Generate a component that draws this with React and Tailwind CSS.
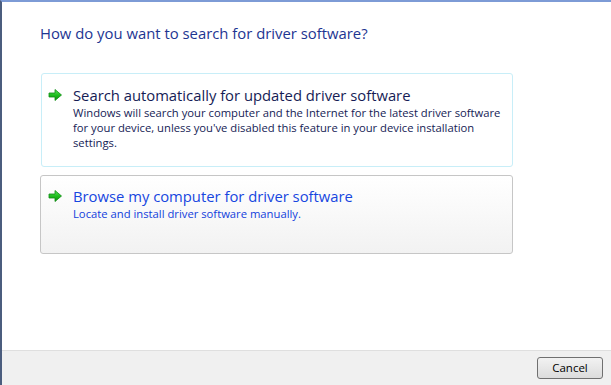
import React from 'react';

const FONT = { fontFamily: '"Open Sans", "Noto Sans", Arial, sans-serif' };

function GreenArrow() {
  return (
    <svg width="15" height="14" viewBox="0 0 15 14" className="shrink-0">
      <defs>
        <linearGradient id="ga" x1="0" y1="0" x2="0" y2="1">
          <stop offset="0" stopColor="#5fe35f" />
          <stop offset="0.5" stopColor="#1fbf1f" />
          <stop offset="1" stopColor="#0c8f0c" />
        </linearGradient>
      </defs>
      <path d="M1 5 H7 V1.5 L13.5 7 L7 12.5 V9 H1 Z" fill="url(#ga)" stroke="#0e8a12" strokeWidth="0.8" strokeLinejoin="round" />
    </svg>
  );
}

function CommandLink({ title, desc, variant }) {
  const hover = variant === 'hover';
  return (
    <div
      className={
        hover
          ? 'ml-[38px] w-[473px] h-[79px] rounded-[3px] border border-[#c6c6c6] bg-gradient-to-b from-white to-[#f2f2f2] flex pl-[7px] pt-[10px]'
          : 'ml-[39px] w-[472px] h-[94px] rounded-[3px] border border-[#c8eef8] bg-white flex pl-[6px] pt-[11px]'
      }
    >
      <div className="pt-[3px]">
        <GreenArrow />
      </div>
      <div className="ml-[10px] flex flex-col">
        <div className={`text-[14.8px] leading-[20px] ${hover ? 'text-[#1646e0]' : 'text-[#151c55]'}`}>{title}</div>
        <div className={`text-[11.25px] leading-[15px] w-[432px] ${hover ? 'text-[#1240dc]' : 'text-[#151c55]'}`}>{desc}</div>
      </div>
    </div>
  );
}

export default function App() {
  return (
    <div style={FONT} className="w-[611px] h-[385px] bg-white flex flex-col border-l-2 border-l-[#4b5d7e] border-t-2 border-t-[#7d9bd6] overflow-hidden">
      <div className="flex-1 flex flex-col">
        <div className="pl-[38px] pt-[21px] text-[14.85px] leading-[20px] text-[#1d3592]">
          How do you want to search for driver software?
        </div>
        <div className="mt-[30px] flex flex-col gap-[8px]">
          <CommandLink
            title="Search automatically for updated driver software"
            desc="Windows will search your computer and the Internet for the latest driver software for your device, unless you've disabled this feature in your device installation settings."
          />
          <CommandLink
            variant="hover"
            title="Browse my computer for driver software"
            desc="Locate and install driver software manually."
          />
        </div>
      </div>
      <div className="h-[35px] border-t border-[#dfdfdf] bg-[#f0f0f0] flex items-center justify-end pr-[8px]">
        <button className="w-[66px] h-[22px] rounded-[3px] border border-[#707070] bg-gradient-to-b from-[#f2f2f2] to-[#dcdcdc] text-[11.5px] text-black leading-none">
          Cancel
        </button>
      </div>
    </div>
  );
}
